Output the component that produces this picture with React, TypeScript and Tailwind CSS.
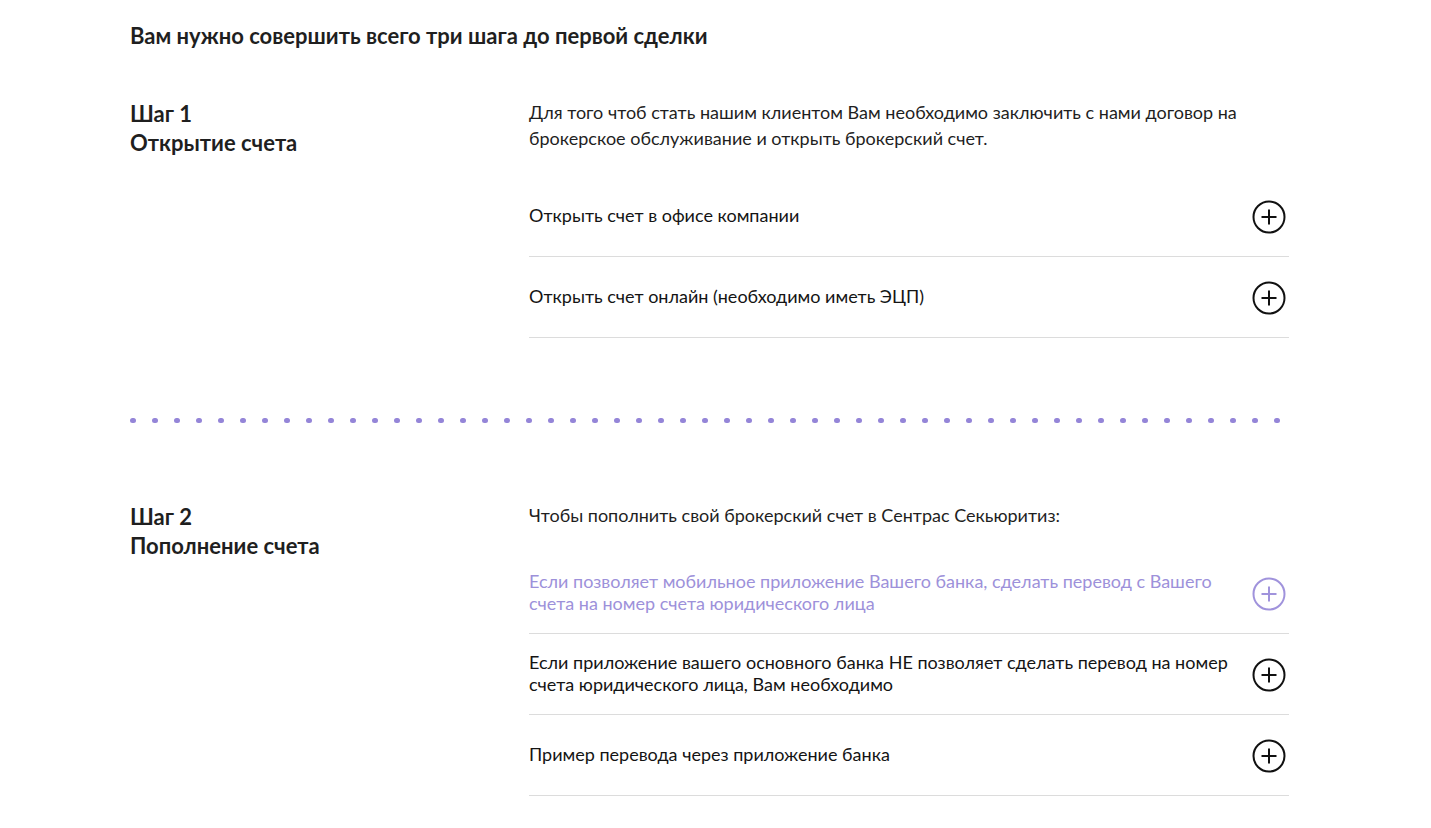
import React from "react";

function PlusIcon({ purple = false }: { purple?: boolean }) {
  const c = purple ? "#a093dc" : "#111111";
  return (
    <svg width="34" height="34" viewBox="0 0 34 34" fill="none">
      <circle cx="17" cy="17" r="15.5" stroke={c} strokeWidth="2" />
      <path d="M17 9.5V24.5M9.5 17H24.5" stroke={c} strokeWidth="2" />
    </svg>
  );
}

function Row({ text, purple = false }: { text: React.ReactNode; purple?: boolean }) {
  return (
    <div className="flex min-h-[81px] items-center justify-between border-b border-[#dcdcdc] py-3">
      <div className={`mb-[3px] max-w-[700px] text-[18px] leading-[22px] ${purple ? "text-[#9d91da]" : "text-[#141414]"}`}>
        {text}
      </div>
      <div className="mr-[3px] mt-[2px] shrink-0">
        <PlusIcon purple={purple} />
      </div>
    </div>
  );
}

export default function App() {
  const dots = Array.from({ length: 53 });
  return (
    <div className="min-h-[828px] bg-white" style={{ fontFamily: "Lato, 'Noto Sans', sans-serif" }}>
      <div className="w-[1160px] pt-[21px]" style={{ marginLeft: 130 }}>
        <h2 className="text-[22px] font-bold leading-[30px] text-[#1f1f1f]">
          Вам нужно совершить всего три шага до первой сделки
        </h2>

        <div className="mt-[48px] flex">
          <div className="w-[399px] shrink-0 text-[22px] font-bold leading-[29px] text-[#1f1f1f]">
            <div>Шаг 1</div>
            <div>Открытие счета</div>
          </div>
          <div className="w-[760px]">
            <p className="text-[18px] leading-[26px] text-[#1f1f1f]">
              Для того чтоб стать нашим клиентом Вам необходимо заключить с нами договор на брокерское обслуживание и открыть брокерский счет.
            </p>
            <div className="mt-[25px]">
              <Row text="Открыть счет в офисе компании" />
              <Row text="Открыть счет онлайн (необходимо иметь ЭЦП)" />
            </div>
          </div>
        </div>

        <div className="mt-[80px] flex w-[1150px] justify-between">
          {dots.map((_, i) => (
            <span key={i} className="block h-[5px] w-[6px] rounded-full bg-[#9485d8]" />
          ))}
        </div>

        <div className="mt-[79px] flex">
          <div className="w-[399px] shrink-0 text-[22px] font-bold leading-[29px] text-[#1f1f1f]">
            <div>Шаг 2</div>
            <div>Пополнение счета</div>
          </div>
          <div className="w-[760px]">
            <p className="text-[18px] leading-[26px] text-[#1f1f1f]">
              Чтобы пополнить свой брокерский счет в Сентрас Секьюритиз:
            </p>
            <div className="mt-[25px]">
              <Row purple text="Если позволяет мобильное приложение Вашего банка, сделать перевод с Вашего счета на номер счета юридического лица" />
              <Row text="Если приложение вашего основного банка НЕ позволяет сделать перевод на номер счета юридического лица, Вам необходимо" />
              <Row text="Пример перевода через приложение банка" />
            </div>
          </div>
        </div>
      </div>
    </div>
  );
}
